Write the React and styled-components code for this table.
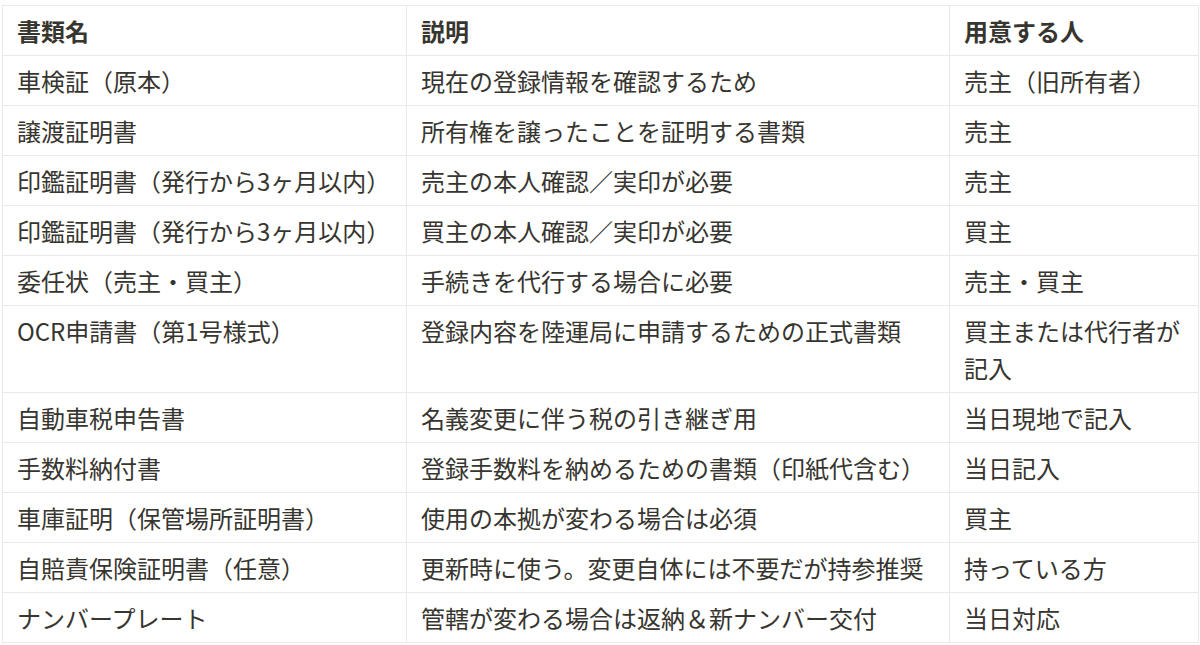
import React from "react";
import styled, { createGlobalStyle } from "styled-components";

const GlobalStyle = createGlobalStyle`
  html, body {
    margin: 0;
    padding: 0;
    background: #ffffff;
  }
  body {
    font-family: "Noto Sans CJK JP", "Noto Sans", sans-serif;
    color: #37352f;
  }
`;

const Page = styled.div`
  padding: 5px 2px 0 2px;
`;

const Table = styled.table`
  width: 1196px;
  border-collapse: collapse;
  table-layout: fixed;
  font-size: 24px;
  line-height: 37px;
`;

const Col = styled.col`
  width: ${({ $w }) => $w}px;
`;

const Th = styled.th`
  border: 1px solid #e9e9e7;
  padding: 6px 14px;
  text-align: left;
  vertical-align: top;
  font-weight: 700;
  color: #37352f;
`;

const Td = styled.td`
  border: 1px solid #e9e9e7;
  padding: 6px 14px;
  vertical-align: top;
  font-weight: 400;
  color: #37352f;
  white-space: ${({ $nowrap }) => ($nowrap ? "nowrap" : "normal")};
`;

const rows = [
  ["車検証（原本）", "現在の登録情報を確認するため", "売主（旧所有者）"],
  ["譲渡証明書", "所有権を譲ったことを証明する書類", "売主"],
  ["印鑑証明書（発行から3ヶ月以内）", "売主の本人確認／実印が必要", "売主"],
  ["印鑑証明書（発行から3ヶ月以内）", "買主の本人確認／実印が必要", "買主"],
  ["委任状（売主・買主）", "手続きを代行する場合に必要", "売主・買主"],
  ["OCR申請書（第1号様式）", "登録内容を陸運局に申請するための正式書類", "買主または代行者が記入"],
  ["自動車税申告書", "名義変更に伴う税の引き継ぎ用", "当日現地で記入"],
  ["手数料納付書", "登録手数料を納めるための書類（印紙代含む）", "当日記入"],
  ["車庫証明（保管場所証明書）", "使用の本拠が変わる場合は必須", "買主"],
  ["自賠責保険証明書（任意）", "更新時に使う。変更自体には不要だが持参推奨", "持っている方"],
  ["ナンバープレート", "管轄が変わる場合は返納＆新ナンバー交付", "当日対応"],
];

export default function App() {
  return (
    <>
      <GlobalStyle />
      <Page>
        <Table>
          <colgroup>
            <Col $w={404} />
            <Col $w={543} />
            <Col $w={249} />
          </colgroup>
          <thead>
            <tr>
              <Th>書類名</Th>
              <Th>説明</Th>
              <Th>用意する人</Th>
            </tr>
          </thead>
          <tbody>
            {rows.map((r, i) => (
              <tr key={i}>
                <Td $nowrap>{r[0]}</Td>
                <Td $nowrap>{r[1]}</Td>
                <Td>{r[2]}</Td>
              </tr>
            ))}
          </tbody>
        </Table>
      </Page>
    </>
  );
}
